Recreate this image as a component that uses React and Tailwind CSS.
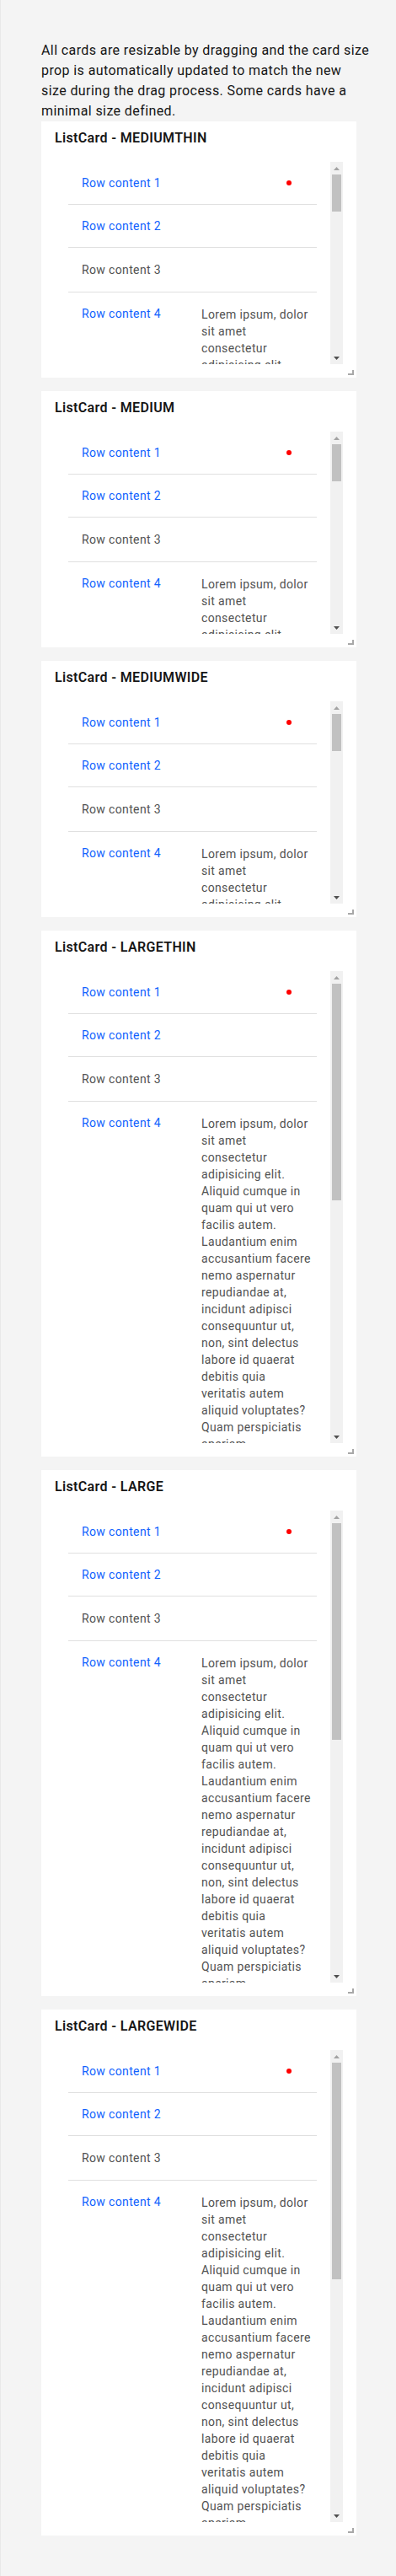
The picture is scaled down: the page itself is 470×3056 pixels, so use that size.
import React from 'react';

// extra content of row 4, broken where the reference column wraps
const loremLines = [
  'Lorem ipsum, dolor',
  'sit amet',
  'consectetur',
  'adipisicing elit.',
  'Aliquid cumque in',
  'quam qui ut vero',
  'facilis autem.',
  'Laudantium enim',
  'accusantium facere',
  'nemo aspernatur',
  'repudiandae at,',
  'incidunt adipisci',
  'consequuntur ut,',
  'non, sint delectus',
  'labore id quaerat',
  'debitis quia',
  'veritatis autem',
  'aliquid voluptates?',
  'Quam perspiciatis',
  'aperiam',
  'voluptatibus nulla',
  'ipsa eos.',
];

const rows = [
  { id: 1, value: 'Row content 1', link: true, dot: true },
  { id: 2, value: 'Row content 2', link: true },
  { id: 3, value: 'Row content 3' },
  { id: 4, value: 'Row content 4', link: true, extra: loremLines },
];

const cards = [
  { title: 'ListCard - MEDIUMTHIN', large: false },
  { title: 'ListCard - MEDIUM', large: false },
  { title: 'ListCard - MEDIUMWIDE', large: false },
  { title: 'ListCard - LARGETHIN', large: true },
  { title: 'ListCard - LARGE', large: true },
  { title: 'ListCard - LARGEWIDE', large: true },
];

const Row = ({ row }) => (
  <li className="flex px-4 py-4 border-b border-[#e0e0e0]">
    <div className="w-[142px] shrink-0">
      {row.link ? (
        <a href="#" className="block text-sm leading-[18px] tracking-[0.36px] text-[#0f62fe]">
          {row.value}
        </a>
      ) : (
        <span className="block text-sm leading-5 tracking-[0.36px] text-[#525252]">{row.value}</span>
      )}
    </div>
    {row.dot && (
      <div className="flex-1 flex justify-end items-center pr-[14px]">
        <span className="w-[6px] h-[6px] rounded-full bg-[#ff0000]"></span>
      </div>
    )}
    {row.extra && (
      <p className="flex-1 whitespace-nowrap text-sm leading-5 tracking-[0.36px] text-[#525252]">
        {row.extra.map((line) => (
          <span key={line} className="block">
            {line}
          </span>
        ))}
      </p>
    )}
  </li>
);

const Scrollbar = ({ thumb }) => (
  <div className="w-[15px] shrink-0 flex flex-col bg-[#f1f1f1]">
    <div className="h-[15px] flex items-center justify-center">
      <svg width="7" height="4" viewBox="0 0 7 4">
        <path d="M0 4h7L3.5 0z" fill="#a3a3a3" />
      </svg>
    </div>
    <div className="flex-1 px-[2px]">
      <div className={`${thumb} bg-[#c1c1c1]`}></div>
    </div>
    <div className="h-[15px] flex items-center justify-center">
      <svg width="7" height="4" viewBox="0 0 7 4">
        <path d="M0 0h7L3.5 4z" fill="#505050" />
      </svg>
    </div>
  </div>
);

const ListCard = ({ title, large }) => (
  <div className="relative bg-white">
    <div className="h-12 px-4 pt-2">
      <h3 className="text-base leading-6 font-semibold tracking-[0.35px] text-[#161616]">{title}</h3>
    </div>
    <div className="px-4 pb-4">
      <div className={`${large ? 'h-[560px]' : 'h-[240px]'} flex`}>
        <div className="flex-1 overflow-hidden">
          <ul className="px-4">
            {rows.map((row) => (
              <Row key={row.id} row={row} />
            ))}
          </ul>
        </div>
        <Scrollbar thumb={large ? 'h-[257px]' : 'h-[44px]'} />
      </div>
    </div>
    {/* resize handle */}
    <span className="absolute right-[3px] bottom-[3px] w-[7px] h-[6px] border-r-2 border-b-2 border-[#a8a8a8]"></span>
  </div>
);

export default function App() {
  return (
    <div className="min-h-screen bg-[#f4f4f4] border-l border-[#e8e8e8] pl-12 pr-[47px] pt-12 pb-12 font-['Roboto',sans-serif]">
      <p className="text-base leading-6 tracking-[0.4px] text-[#161616] whitespace-nowrap">
        All cards are resizable by dragging and the card size
        <br />
        prop is automatically updated to match the new
        <br />
        size during the drag process. Some cards have a
        <br />
        minimal size defined.
      </p>
      <div className="flex flex-col gap-4">
        {cards.map((card) => (
          <ListCard key={card.title} title={card.title} large={card.large} />
        ))}
      </div>
    </div>
  );
}
